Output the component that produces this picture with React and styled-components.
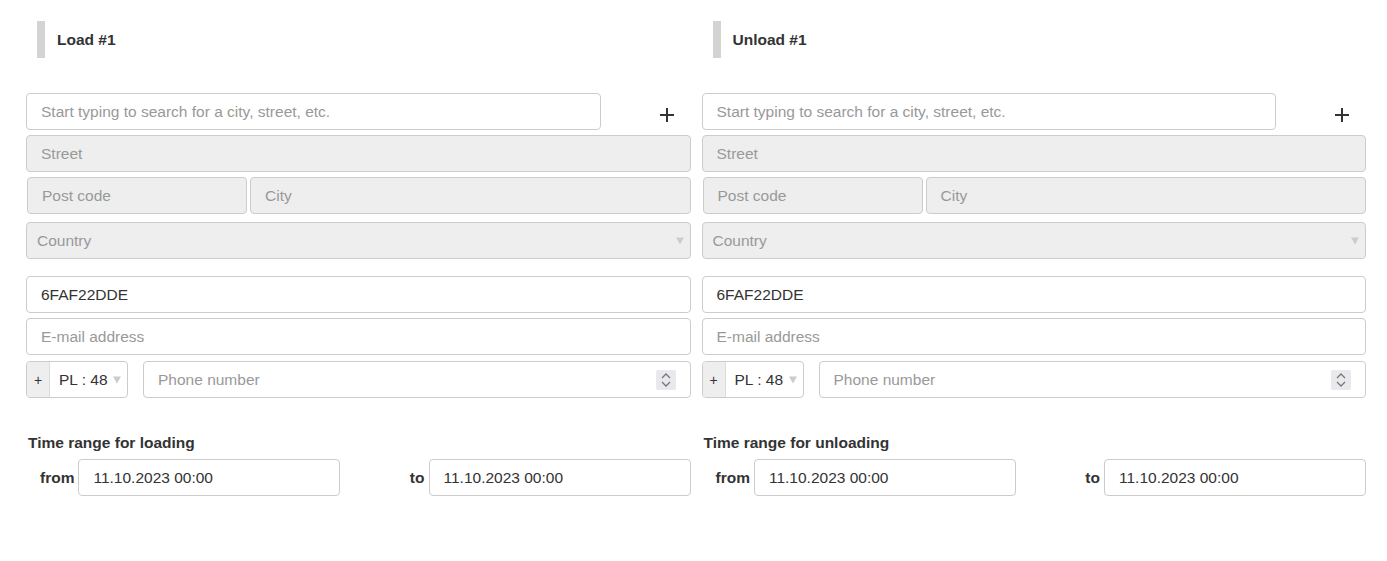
import React from "react";
import styled, { createGlobalStyle } from "styled-components";

const Global = createGlobalStyle`
  html, body { margin: 0; padding: 0; background: #fff; }
  body { font-family: "Liberation Sans", Arial, sans-serif; color: #333; }
  * { box-sizing: border-box; }
`;

const Page = styled.div`
  display: grid;
  grid-template-columns: 1fr 1fr;
  column-gap: 11px;
  padding: 21px 21px 0 26px;
`;

const Column = styled.section`
  display: flex;
  flex-direction: column;
`;

const Header = styled.div`
  display: flex;
  align-items: center;
  gap: 12px;
  margin-left: 11px;
  height: 37px;
  margin-bottom: 35px;
`;

const HeaderBar = styled.span`
  width: 8px;
  height: 37px;
  background: #d3d3d3;
`;

const HeaderTitle = styled.h3`
  margin: 0;
  font-size: 15.5px;
  font-weight: bold;
  color: #333;
`;

const Field = styled.div`
  height: 37px;
  border: 1px solid #ccc;
  border-radius: 4px;
  background: ${(p) => (p.$disabled ? "#eee" : "#fff")};
  display: flex;
  align-items: center;
  padding-left: ${(p) => p.$pad ?? 14}px;
  padding-right: 10px;
  font-size: 15.5px;
  color: ${(p) => (p.$placeholder ? "#999" : "#333")};
  margin-top: ${(p) => p.$mt ?? 0}px;
  flex: ${(p) => (p.$grow ? 1 : "none")};
  width: ${(p) => (p.$w ? p.$w + "px" : "auto")};
  position: relative;
  white-space: nowrap;
  overflow: hidden;
`;

const SearchRow = styled.div`
  display: flex;
  align-items: flex-start;
`;

const PlusButton = styled.button`
  width: 90px;
  height: 37px;
  border: none;
  background: transparent;
  display: flex;
  justify-content: flex-end;
  align-items: flex-start;
  padding: 15px 17px 0 0;
  cursor: pointer;
`;

const Row = styled.div`
  display: flex;
  gap: ${(p) => p.$gap ?? 3}px;
  margin-top: ${(p) => p.$mt ?? 0}px;
  padding-left: ${(p) => p.$pl ?? 0}px;
`;

const Caret = styled.span`
  position: absolute;
  right: ${(p) => p.$right ?? 6}px;
  top: 50%;
  transform: translateY(-50%);
  width: 0;
  height: 0;
  border-left: 4px solid transparent;
  border-right: 4px solid transparent;
  border-top: 7px solid #ccc;
`;

const PhoneGroup = styled.div`
  display: flex;
  height: 37px;
  border: 1px solid #ccc;
  border-radius: 4px;
  overflow: hidden;
  width: 102px;
  flex: none;
`;

const Addon = styled.span`
  width: 23px;
  background: #eee;
  border-right: 1px solid #ddd;
  display: flex;
  align-items: center;
  justify-content: center;
  font-size: 14px;
  color: #333;
`;

const CodeSelect = styled.span`
  flex: 1;
  position: relative;
  display: flex;
  align-items: center;
  padding-left: 9px;
  font-size: 15.5px;
  color: #333;
`;

const Spinner = styled.span`
  position: absolute;
  right: 14px;
  top: 50%;
  transform: translateY(-50%);
  width: 20px;
  height: 20px;
  background: #e9e9ed;
  border-radius: 2px;
  display: flex;
  align-items: center;
  justify-content: center;
`;

const TimeLabel = styled.div`
  margin-top: 36px;
  padding-left: 2px;
  font-size: 15.5px;
  font-weight: bold;
  color: #333;
  line-height: 17px;
`;

const TimeRow = styled.div`
  display: flex;
  justify-content: space-between;
  margin-top: 8px;
`;

const TimeGroup = styled.div`
  display: flex;
  align-items: center;
  gap: 4px;
  padding-left: ${(p) => p.$pl ?? 0}px;
`;

const TimeWord = styled.span`
  font-size: 15.5px;
  font-weight: bold;
  color: #333;
`;

function PlusIcon() {
  return (
    <svg width="14" height="14" viewBox="0 0 14 14">
      <path d="M7 0v14M0 7h14" stroke="#333" strokeWidth="2" />
    </svg>
  );
}

function SpinIcon() {
  return (
    <svg width="12" height="16" viewBox="0 0 12 16">
      <path d="M2 6l4-4 4 4M2 10l4 4 4-4" stroke="#777" strokeWidth="1.3" fill="none" />
    </svg>
  );
}

function Block({ title, timeLabel }) {
  return (
    <Column>
      <Header>
        <HeaderBar />
        <HeaderTitle>{title}</HeaderTitle>
      </Header>
      <SearchRow>
        <Field $grow $placeholder>Start typing to search for a city, street, etc.</Field>
        <PlusButton aria-label="add">
          <PlusIcon />
        </PlusButton>
      </SearchRow>
      <Field $disabled $placeholder $mt={5}>Street</Field>
      <Row $mt={5} $pl={1}>
        <Field $disabled $placeholder $w={220}>Post code</Field>
        <Field $disabled $placeholder $grow>City</Field>
      </Row>
      <Field $disabled $placeholder $mt={8} $pad={10}>
        Country
        <Caret $right={6} />
      </Field>
      <Field $mt={17}>6FAF22DDE</Field>
      <Field $placeholder $mt={5}>E-mail address</Field>
      <Row $mt={6} $gap={15}>
        <PhoneGroup>
          <Addon>+</Addon>
          <CodeSelect>
            PL : 48
            <Caret $right={6} />
          </CodeSelect>
        </PhoneGroup>
        <Field $grow $placeholder>
          Phone number
          <Spinner>
            <SpinIcon />
          </Spinner>
        </Field>
      </Row>
      <TimeLabel>{timeLabel}</TimeLabel>
      <TimeRow>
        <TimeGroup $pl={14}>
          <TimeWord>from</TimeWord>
          <Field $w={262}>11.10.2023 00:00</Field>
        </TimeGroup>
        <TimeGroup>
          <TimeWord>to</TimeWord>
          <Field $w={262}>11.10.2023 00:00</Field>
        </TimeGroup>
      </TimeRow>
    </Column>
  );
}

export default function App() {
  return (
    <>
      <Global />
      <Page>
        <Block title="Load #1" timeLabel="Time range for loading" />
        <Block title="Unload #1" timeLabel="Time range for unloading" />
      </Page>
    </>
  );
}
